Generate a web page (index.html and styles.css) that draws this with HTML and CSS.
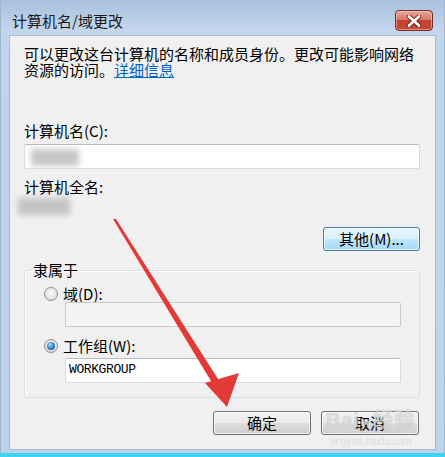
FILE: index.html
```html
<!DOCTYPE html>
<html lang="zh-CN">

<head>
    <meta charset="UTF-8">
    <title>计算机名/域更改</title>
    <link rel="stylesheet" href="styles.css">
</head>

<body>
    <div class="window">
        <div class="titlebar">
            <span class="title">计算机名/域更改</span>
            <div class="close">
                <svg width="16" height="12" viewBox="0 0 16 12">
                    <path d="M3 1.5 L13 10.5 M13 1.5 L3 10.5" stroke="#6b1f17" stroke-width="4.6" stroke-linecap="round" />
                    <path d="M3 1.5 L13 10.5 M13 1.5 L3 10.5" stroke="#ffffff" stroke-width="2.8" stroke-linecap="round" />
                </svg>
            </div>
        </div>

        <div class="client">
            <p class="desc">可以更改这台计算机的名称和成员身份。更改可能影响网络资源的访问。<a href="#">详细信息</a></p>

            <div class="label first">计算机名(C):</div>
            <div class="textbox">
                <span class="smudge smudge-name"></span>
            </div>

            <div class="label">计算机全名:</div>
            <div class="fullname">
                <span class="smudge smudge-full"></span>
            </div>

            <div class="more-row">
                <div class="btn btn-hot">其他(M)...</div>
            </div>

            <fieldset class="group">
                <legend>隶属于</legend>
                <div class="radio">
                    <span class="radio-dot"></span>域(D):
                </div>
                <div class="textbox indent disabled"></div>
                <div class="radio second">
                    <span class="radio-dot checked"></span>工作组(W):
                </div>
                <div class="textbox indent wg">WORKGROUP</div>
            </fieldset>

            <div class="actions">
                <div class="btn">确定</div>
                <div class="btn">取消</div>
            </div>
        </div>

        <div class="taskline"></div>

        <!-- arrow drawn over the dialog -->
        <svg class="arrow" width="445" height="457" viewBox="0 0 445 457">
            <path d="M113 219 L116 219 L220 382 L214 386 Z" fill="#e23a36" />
            <path d="M227 407 L205 383 L239 373 Z" fill="#e23a36" />
        </svg>

        <div class="watermark">Bai<span class="paw">&#x2767;</span>经验</div>
        <div class="watermark-url">jingyan.baidu.com</div>
    </div>
</body>

</html>
```

FILE: styles.css
```css
/* Reset */
*,
*::after,
*::before {
    box-sizing: border-box;
    padding: 0;
    margin: 0;
}

body {
    width: 445px;
    height: 457px;
    overflow: hidden;
    font-family: "Noto Sans CJK SC", "Noto Sans", sans-serif;
    font-size: 15px;
    color: #000;
}

.window {
    position: relative;
    width: 445px;
    height: 457px;
    display: flex;
    flex-direction: column;
    padding: 0 8px;
    background: linear-gradient(to bottom, #a8c1de 0px, #c3d6ec 30px, #bfd4eb 60px, #bdd3ea 100%);
    border-left: 1px solid #9fb6d0;
    border-right: 1px solid #9fb6d0;
}

.titlebar {
    height: 35px;
    display: flex;
    align-items: flex-start;
    justify-content: space-between;
}

.title {
    margin-top: 12px;
    margin-left: 3px;
    line-height: 18px;
    color: #1b1b1b;
}

.close {
    margin-top: 10px;
    margin-right: 3px;
    width: 38px;
    height: 21px;
    border: 1px solid #7d2a22;
    border-radius: 4px;
    background: linear-gradient(to bottom, #e9a89c 0%, #d77a6a 45%, #c3402d 50%, #c6493a 100%);
    display: flex;
    align-items: center;
    justify-content: center;
    box-shadow: inset 0 0 0 1px rgba(255, 210, 200, 0.5);
}

.client {
    height: 415px;
    background-color: #f0f0f0;
    border: 1px solid #a7bcd3;
    padding: 0 15px 0 14px;
    display: flex;
    flex-direction: column;
}

.desc {
    margin-top: 10px;
    width: 395px;
    line-height: 16px;
}

.desc a {
    color: #0066cc;
    text-decoration: underline;
}

.label {
    line-height: 16px;
    margin-top: 10px;
}

.label.first {
    margin-top: 45px;
}

.textbox {
    margin-top: 5px;
    height: 25px;
    background-color: #fff;
    border: 1px solid #d8dbe0;
    border-top-color: #b9bdc3;
    border-radius: 2px;
    position: relative;
    overflow: hidden;
}

.smudge {
    position: absolute;
    background-color: #b8b8b8;
    filter: blur(3px);
    opacity: 0.8;
}

.smudge-name {
    left: 6px;
    top: 4px;
    width: 48px;
    height: 17px;
}

.fullname {
    position: relative;
    height: 22px;
}

.smudge-full {
    left: -6px;
    top: 3px;
    width: 52px;
    height: 17px;
}

.more-row {
    margin-top: 10px;
    display: flex;
    justify-content: flex-end;
}

.btn {
    width: 98px;
    height: 24px;
    border: 1px solid #707070;
    border-radius: 3px;
    background: linear-gradient(to bottom, #f2f2f2 0%, #ebebeb 50%, #dddddd 51%, #cfcfcf 100%);
    box-shadow: inset 0 0 0 1px rgba(255, 255, 255, 0.7);
    display: flex;
    align-items: center;
    justify-content: center;
    line-height: 16px;
}

.btn-hot {
    width: 97px;
    border-color: #3c7fb1;
    background: linear-gradient(to bottom, #eaf6fd 0%, #d9f0fc 50%, #bee6fd 51%, #a7d9f5 100%);
}

.group {
    margin-top: 8px;
    border: 1px solid #d5dfe5;
    border-radius: 3px;
    padding: 5px 18px 14px 19px;
    box-shadow: inset 1px 1px 0 #fff;
}

.group legend {
    margin-left: -12px;
    padding: 0 1px;
    line-height: 22px;
}

.radio {
    display: flex;
    align-items: center;
    gap: 5px;
    line-height: 16px;
    height: 16px;
}

.radio.second {
    margin-top: 11px;
}

.radio-dot {
    width: 14px;
    height: 14px;
    border-radius: 50%;
    border: 1px solid #8e8f8f;
    background: radial-gradient(circle at 50% 40%, #fafafa 0%, #e4e4e4 55%, #c9c9c9 100%);
    position: relative;
}

.radio-dot.checked::after {
    content: "";
    position: absolute;
    left: 2px;
    top: 2px;
    width: 8px;
    height: 8px;
    border-radius: 50%;
    background: radial-gradient(circle at 40% 35%, #a8e0fb 0%, #3b8fd0 45%, #15497c 100%);
}

.indent {
    margin-left: 21px;
}

.group .textbox {
    margin-top: 0;
}

.group .textbox.wg {
    margin-top: 4px;
    font-family: "Liberation Mono", monospace;
    font-size: 13px;
    line-height: 22px;
    padding-left: 3px;
    letter-spacing: -0.4px;
}

.textbox.disabled {
    background-color: #f4f4f4;
    border-color: #c9cbcd;
}

.actions {
    margin-top: 13px;
    display: flex;
    justify-content: flex-end;
    gap: 10px;
    padding-right: 1px;
}

.taskline {
    position: absolute;
    left: -1px;
    right: -1px;
    bottom: 0;
    height: 4px;
    background-color: #41d2f3;
}

.arrow {
    position: absolute;
    left: -1px;
    top: 0;
    pointer-events: none;
}

.watermark {
    position: absolute;
    left: 325px;
    top: 408px;
    font-family: "Liberation Sans", "Noto Sans CJK SC", sans-serif;
    font-size: 20px;
    line-height: 24px;
    font-weight: bold;
    color: rgba(255, 255, 255, 0.5);
    text-shadow: 0 0 1px rgba(120, 120, 120, 0.5);
    letter-spacing: 1px;
}

.watermark .paw {
    font-size: 14px;
}

.watermark-url {
    position: absolute;
    left: 330px;
    top: 436px;
    font-family: "Liberation Sans", sans-serif;
    font-size: 10px;
    line-height: 12px;
    color: rgba(200, 200, 200, 0.5);
}
```
